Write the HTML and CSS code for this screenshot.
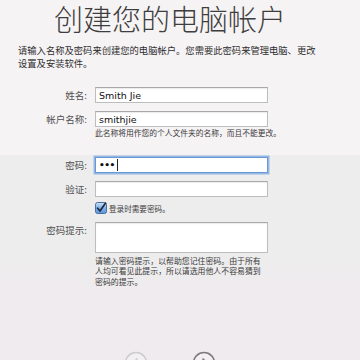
FILE: index.html
```html
<!DOCTYPE html>
<html lang="zh-CN">
<head>
<meta charset="utf-8">
<title>创建您的电脑帐户</title>
<link rel="stylesheet" href="styles.css">
</head>
<body>
<div class="page">
  <h1 class="title">创建您的电脑帐户</h1>
  <p class="intro">请输入名称及密码来创建您的电脑帐户。您需要此密码来管理电脑、更改<br>设置及安装软件。</p>

  <section class="part part-top">
    <div class="row">
      <label class="label">姓名:</label>
      <div class="field"><span class="value">Smith Jie</span></div>
    </div>
    <div class="row">
      <label class="label">帐户名称:</label>
      <div class="field"><span class="value">smithjie</span></div>
    </div>
    <p class="note note-account">此名称将用作您的个人文件夹的名称，而且不能更改。</p>
  </section>

  <section class="part part-bottom">
    <div class="row">
      <label class="label">密码:</label>
      <div class="field focused"><span class="dots">•••</span><span class="caret"></span></div>
    </div>
    <div class="row">
      <label class="label">验证:</label>
      <div class="field"></div>
    </div>
    <div class="check-row">
      <svg class="checkbox" width="12" height="12" viewBox="0 0 12 12">
        <defs>
          <linearGradient id="cb" x1="0" y1="0" x2="0" y2="1">
            <stop offset="0" stop-color="#cfe2f8"/>
            <stop offset="0.5" stop-color="#7fb0ea"/>
            <stop offset="1" stop-color="#5a95de"/>
          </linearGradient>
        </defs>
        <rect x="0.5" y="0.5" width="11" height="11" rx="2" fill="url(#cb)" stroke="#4a6f9c"/>
        <path d="M2.6 6.2 L5 9 L10.4 1.2" fill="none" stroke="#1c2a3c" stroke-width="1.7" stroke-linecap="round" stroke-linejoin="round"/>
      </svg>
      <span class="check-text">登录时需要密码。</span>
    </div>
    <div class="row row-tall">
      <label class="label">密码提示:</label>
      <div class="field tall"></div>
    </div>
    <p class="note note-hint">请输入密码提示，以帮助您记住密码。由于所有<br>人均可看见此提示，所以请选用他人不容易猜到<br>密码的提示。</p>

    <nav class="nav">
      <svg class="nav-btn" width="24" height="24" viewBox="0 0 24 24">
        <circle cx="12" cy="12" r="10.5" fill="#f3f0f2" stroke="#cfcccf" stroke-width="1.6"/>
        <path d="M13.5 7.5 L9 12 L13.5 16.5" fill="none" stroke="#cfcccf" stroke-width="1.6"/>
      </svg>
      <svg class="nav-btn" width="24" height="24" viewBox="0 0 24 24">
        <circle cx="12" cy="12" r="10.5" fill="#f3f0f2" stroke="#7d7b7d" stroke-width="1.6"/>
        <path d="M10.5 7.5 L15 12 L10.5 16.5" fill="none" stroke="#7d7b7d" stroke-width="1.6"/>
      </svg>
    </nav>
  </section>
</div>
</body>
</html>
```
FILE: styles.css
```css
html, body {
  margin: 0;
  padding: 0;
}
body {
  width: 360px;
  height: 360px;
  overflow: hidden;
  background: #f6f3f5;
  font-family: "Noto Sans CJK SC", "DejaVu Sans", sans-serif;
  color: #333;
}
.page {
  display: flex;
  flex-direction: column;
}
.title {
  margin: 0;
  padding-right: 20px;
  height: 36px;
  line-height: 36px;
  font-size: 29px;
  font-weight: 300;
  text-align: center;
  color: #3e3e3e;
}
.intro {
  margin: 8px 0 0 18px;
  font-size: 9.3px;
  line-height: 12.5px;
  color: #2e2e2e;
  white-space: nowrap;
}
.part {
  display: flex;
  flex-direction: column;
}
.part-top {
  padding: 18px 0 17px;
}
.part-bottom {
  padding-top: 2px;
  height: 220px;
  background: linear-gradient(#ededed 0, #ededed 95px, #efebee 140px, #efebee 100%);
}
.row {
  display: grid;
  grid-template-columns: 87px 173px;
  column-gap: 8px;
  align-items: center;
  height: 16px;
}
.row + .row {
  margin-top: 8px;
}
.label {
  text-align: right;
  font-size: 9.5px;
  color: #505050;
  white-space: nowrap;
}
.field {
  box-sizing: border-box;
  height: 16px;
  background: #fff;
  border: 1px solid #bdbdbd;
  border-top-color: #a9a9a9;
  box-shadow: inset 0 1px 1px rgba(0, 0, 0, 0.08);
  display: flex;
  align-items: center;
  padding-left: 3px;
}
.value {
  font-family: "DejaVu Sans", sans-serif;
  font-size: 9.5px;
  color: #111;
}
.focused {
  border-color: #6b98d3;
  box-shadow: 0 0 0 1.5px rgba(120, 165, 225, 0.75);
}
.dots {
  font-family: "DejaVu Sans", sans-serif;
  font-size: 9px;
  font-weight: bold;
  color: #111;
  letter-spacing: -0.5px;
}
.caret {
  width: 1px;
  height: 12px;
  margin-left: 2px;
  background: #222;
}
.note {
  margin: 0;
  margin-left: 95px;
  font-size: 7.9px;
  color: #3a3a3a;
  white-space: nowrap;
}
.note-account {
  margin-top: 1px;
  line-height: 10px;
  font-size: 7.75px;
}
.check-row {
  display: flex;
  align-items: center;
  gap: 2px;
  margin: 5px 0 0 95px;
  height: 12px;
}
.checkbox {
  display: block;
}
.check-text {
  font-size: 7.6px;
  color: #3a3a3a;
}
.row-tall {
  height: 31px;
  align-items: start;
}
.check-row + .row-tall {
  margin-top: 8px;
}
.row-tall .label {
  line-height: 16px;
}
.field.tall {
  height: 31px;
}
.note-hint {
  margin-top: 2.5px;
  line-height: 10.5px;
}
.nav {
  display: flex;
  gap: 44px;
  margin: 64px 0 0 124px;
}
.nav-btn {
  display: block;
}
```
